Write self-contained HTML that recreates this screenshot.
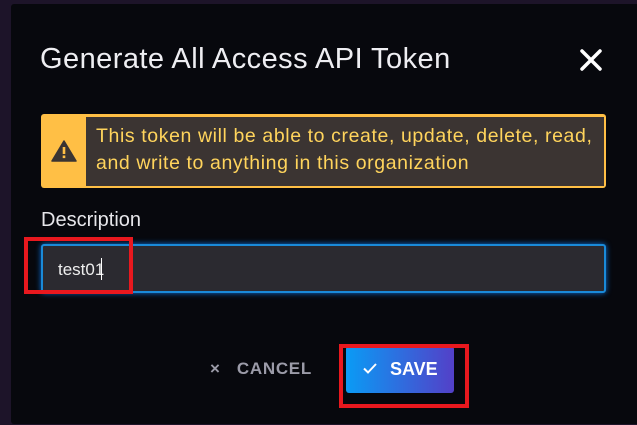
<!DOCTYPE html>
<html><head><style>
*{margin:0;padding:0;box-sizing:border-box}
body{width:637px;height:425px;overflow:hidden;background:#1d1429;font-family:"Liberation Sans",sans-serif;position:relative}
.modal{position:absolute;left:11px;top:4px;width:640px;height:420px;background:#07080d;border-radius:3px}
.title{position:absolute;left:40px;top:43px;font-size:29px;letter-spacing:0.45px;color:#eeeef2;white-space:nowrap}
.close{position:absolute;left:579px;top:48px}
.warn{position:absolute;left:41px;top:114px;width:565px;height:74px;background:#ffbf45;border-radius:3px}
.warn .in{position:absolute;left:45px;top:3px;right:2px;bottom:2px;background:#3b3432}
.warn .t{position:absolute;left:55px;top:9px;font-size:19.5px;letter-spacing:0.6px;line-height:27px;color:#ffd45c;white-space:nowrap}
.warn svg{position:absolute;left:10px;top:26px}
.lab{position:absolute;left:41px;top:209px;font-size:20px;color:#e6e6ea}
.input{position:absolute;left:41px;top:244px;width:565px;height:49px;background:#2b2a30;border:2px solid #1a8ad8;border-radius:3px;box-shadow:0 0 6px #0a70d8}
.input span{position:absolute;left:15px;top:14px;font-size:17px;color:#eee}
.cur{position:absolute;left:101px;top:258px;width:1px;height:22px;background:#fff}
.cancel{position:absolute;left:210px;top:359px;font-size:17px;font-weight:bold;color:#9b9ba8;letter-spacing:.7px}
.save{position:absolute;left:346px;top:346px;width:108px;height:47px;background:linear-gradient(90deg,#0a9bf5,#5340c8);border-radius:3px}
.save span{position:absolute;left:44px;top:13px;font-size:18px;font-weight:bold;color:#fff}
.red{position:absolute;border:4px solid #e8181e}
</style></head><body>
<div class="modal"></div>
<div class="title">Generate All Access API Token</div>
<svg class="close" width="24" height="24" viewBox="0 0 24 24"><path d="M3 3L21 21M21 3L3 21" stroke="#fff" stroke-width="3.5" stroke-linecap="round"/></svg>
<div class="warn"><div class="in"></div>
<svg width="26" height="22" viewBox="0 0 26 22"><path d="M13 1L25 21H1Z" fill="#3b3432" stroke="#3b3432" stroke-width="1.5" stroke-linejoin="round"/><rect x="11.7" y="7" width="2.6" height="7" fill="#ffbf45"/><rect x="11.7" y="15.5" width="2.6" height="2.6" fill="#ffbf45"/></svg>
<div class="t">This token will be able to create, update, delete, read,<br>and write to anything in this organization</div></div>
<div class="lab">Description</div>
<div class="input"><span>test01</span></div>
<div class="cur"></div>
<div class="cancel">×&nbsp;&nbsp;&nbsp;CANCEL</div>
<div class="save"><svg style="position:absolute;left:17px;top:17px" width="14" height="11" viewBox="0 0 14 11"><path d="M1 5.5L5 9.5L13 1" stroke="#fff" stroke-width="2" fill="none"/></svg><span>SAVE</span></div>
<div class="red" style="left:24px;top:237px;width:109px;height:57px"></div>
<div class="red" style="left:339px;top:344px;width:130px;height:64px"></div>
</body></html>
